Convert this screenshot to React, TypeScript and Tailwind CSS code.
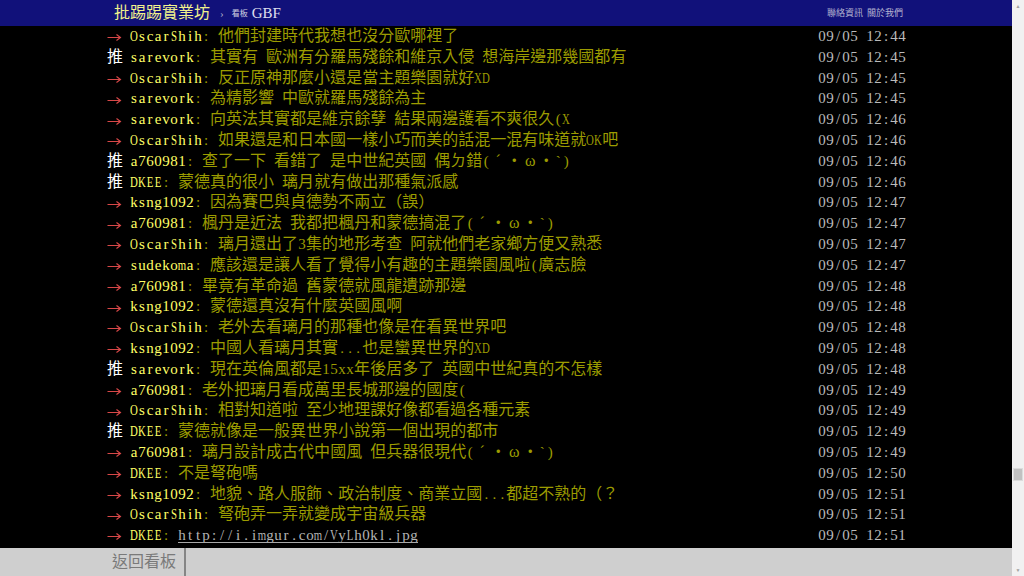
import React from "react";

type Row = { tag: "推" | "→"; user: string; text: string; time: string; link?: boolean };

const rows: Row[] = [
  { tag: "→", user: "OscarShih", text: "他們封建時代我想也沒分歐哪裡了", time: "12:44" },
  { tag: "推", user: "sarevork", text: "其實有 歐洲有分羅馬殘餘和維京入侵 想海岸邊那幾國都有", time: "12:45" },
  { tag: "→", user: "OscarShih", text: "反正原神那麼小還是當主題樂園就好XD", time: "12:45" },
  { tag: "→", user: "sarevork", text: "為精影響 中歐就羅馬殘餘為主", time: "12:45" },
  { tag: "→", user: "sarevork", text: "向英法其實都是維京餘孽 結果兩邊護看不爽很久(X", time: "12:46" },
  { tag: "→", user: "OscarShih", text: "如果還是和日本國一樣小巧而美的話混一混有味道就OK吧", time: "12:46" },
  { tag: "推", user: "a760981", text: "查了一下 看錯了 是中世紀英國 偶ㄉ錯(´・ω・`)", time: "12:46" },
  { tag: "推", user: "DKEE", text: "蒙德真的很小 璃月就有做出那種氣派感", time: "12:46" },
  { tag: "→", user: "ksng1092", text: "因為賽巴與貞德勢不兩立（誤）", time: "12:47" },
  { tag: "→", user: "a760981", text: "楓丹是近法 我都把楓丹和蒙德搞混了(´・ω・`)", time: "12:47" },
  { tag: "→", user: "OscarShih", text: "璃月還出了3集的地形考查 阿就他們老家鄉方便又熟悉", time: "12:47" },
  { tag: "→", user: "sudekoma", text: "應該還是讓人看了覺得小有趣的主題樂園風啦(廣志臉", time: "12:47" },
  { tag: "→", user: "a760981", text: "畢竟有革命過 舊蒙德就風龍遺跡那邊", time: "12:48" },
  { tag: "→", user: "ksng1092", text: "蒙德還真沒有什麼英國風啊", time: "12:48" },
  { tag: "→", user: "OscarShih", text: "老外去看璃月的那種也像是在看異世界吧", time: "12:48" },
  { tag: "→", user: "ksng1092", text: "中國人看璃月其實...也是蠻異世界的XD", time: "12:48" },
  { tag: "推", user: "sarevork", text: "現在英倫風都是15xx年後居多了 英國中世紀真的不怎樣", time: "12:48" },
  { tag: "→", user: "a760981", text: "老外把璃月看成萬里長城那邊的國度(", time: "12:49" },
  { tag: "→", user: "OscarShih", text: "相對知道啦 至少地理課好像都看過各種元素", time: "12:49" },
  { tag: "推", user: "DKEE", text: "蒙德就像是一般異世界小說第一個出現的都市", time: "12:49" },
  { tag: "→", user: "a760981", text: "璃月設計成古代中國風 但兵器很現代(´・ω・`)", time: "12:49" },
  { tag: "→", user: "DKEE", text: "不是弩砲嗎", time: "12:50" },
  { tag: "→", user: "ksng1092", text: "地貌、路人服飾、政治制度、商業立國...都超不熟的（？", time: "12:51" },
  { tag: "→", user: "OscarShih", text: "弩砲弄一弄就變成宇宙級兵器", time: "12:51" },
  { tag: "→", user: "DKEE", text: "http://i.imgur.com/VyLh0kl.jpg", time: "12:51", link: true },
];

const WIDE = /[A-Zmw]/;

// Terminal-style text: ASCII half width (8px), wide symbols full width (16px)
function Term({ text }: { text: string }) {
  return (
    <>
      {Array.from(text).map((ch, i) => {
        const code = ch.charCodeAt(0);
        if (code < 128) {
          return (
            <span
              key={i}
              className={
                WIDE.test(ch)
                  ? "inline-flex w-[8px] scale-x-[0.72] justify-center text-[15px]"
                  : "inline-flex w-[8px] justify-center text-[15px]"
              }
            >
              {ch === " " ? "\u00a0" : ch}
            </span>
          );
        }
        if (ch === "´" || ch === "ω") {
          return (
            <span key={i} className="inline-flex w-[16px] justify-center">
              {ch}
            </span>
          );
        }
        return <React.Fragment key={i}>{ch}</React.Fragment>;
      })}
    </>
  );
}

export default function App() {
  return (
    <div className="flex h-[576px] w-[1024px] overflow-hidden bg-black font-['Liberation_Serif','Noto_Sans_CJK_TC',serif]">
      <div className="flex w-[1012px] flex-col">
        <div className="h-[26px] bg-[#11117a]">
          <div className="mx-auto flex h-full w-[800px] items-center pl-[8px] pr-[3px]">
            <span className="text-[16px] leading-none text-[#f2f28c]">批踢踢實業坊</span>
            <span className="ml-[10px] text-[11px] leading-none text-[#aaaacc]">›</span>
            <span className="ml-[8px] mt-[2px] text-[8px] leading-none text-[#d0d0e0]">看板</span>
            <span className="ml-[4px] text-[15px] leading-none text-[#e0e0f0]">GBF</span>
            <div className="ml-auto flex gap-[4px] text-[9px] leading-none text-[#b4b4d0]">
              <span>聯絡資訊</span>
              <span>關於我們</span>
            </div>
          </div>
        </div>
        <div className="flex-1">
          <div className="mx-auto w-[800px] pl-[1px]">
            {rows.map((r, i) => (
              <div key={i} className="flex h-[20.8px] items-center whitespace-pre text-[16px] leading-[20.8px]">
                {r.tag === "推" ? (
                  <span className="w-[23px] text-white">推</span>
                ) : (
                  <span className="w-[23px]">
                    <svg width="15" height="10" viewBox="0 0 15 10" className="inline-block align-middle">
                      <path d="M0.5 5.5 H13.5 M9.5 2.5 L13.5 5.5 L9.5 8.5" fill="none" stroke="#d84848" strokeWidth="1.1" />
                    </svg>
                  </span>
                )}
                <span className="text-[#ffff66]">
                  <Term text={r.user} />
                </span>
                <span className="text-[#9c9c00]">
                  <Term text=": " />
                  {r.link ? (
                    <span className="relative inline-block text-[#b4b4b4]">
                      <Term text={r.text} />
                      <span className="absolute bottom-[3px] left-0 right-0 h-px bg-[#a8a8a8]" />
                    </span>
                  ) : (
                    <Term text={r.text} />
                  )}
                </span>
                <span className="ml-auto text-[#bbbbbb]">
                  <Term text={"09/05 " + r.time} />
                </span>
              </div>
            ))}
          </div>
        </div>
        <div className="flex h-[28px] bg-[#cfcfcf]">
          <div className="flex w-[184px] items-center justify-end pr-[8px] text-[16px] text-[#7a7a7a]">返回看板</div>
          <div className="w-[2px] bg-[#858585]" />
        </div>
      </div>
      <div className="flex w-[12px] flex-col bg-[#f1f1f1]">
        <div className="flex h-[12px] items-center justify-center text-[5px] leading-none text-[#a0a0a0]">▲</div>
        <div className="flex-1">
          <div className="mx-auto mt-[456px] h-[13px] w-[10px] border border-[#dcdcdc] bg-[#c1c1c1]" />
        </div>
        <div className="flex h-[12px] items-center justify-center text-[5px] leading-none text-[#a0a0a0]">▼</div>
      </div>
    </div>
  );
}
